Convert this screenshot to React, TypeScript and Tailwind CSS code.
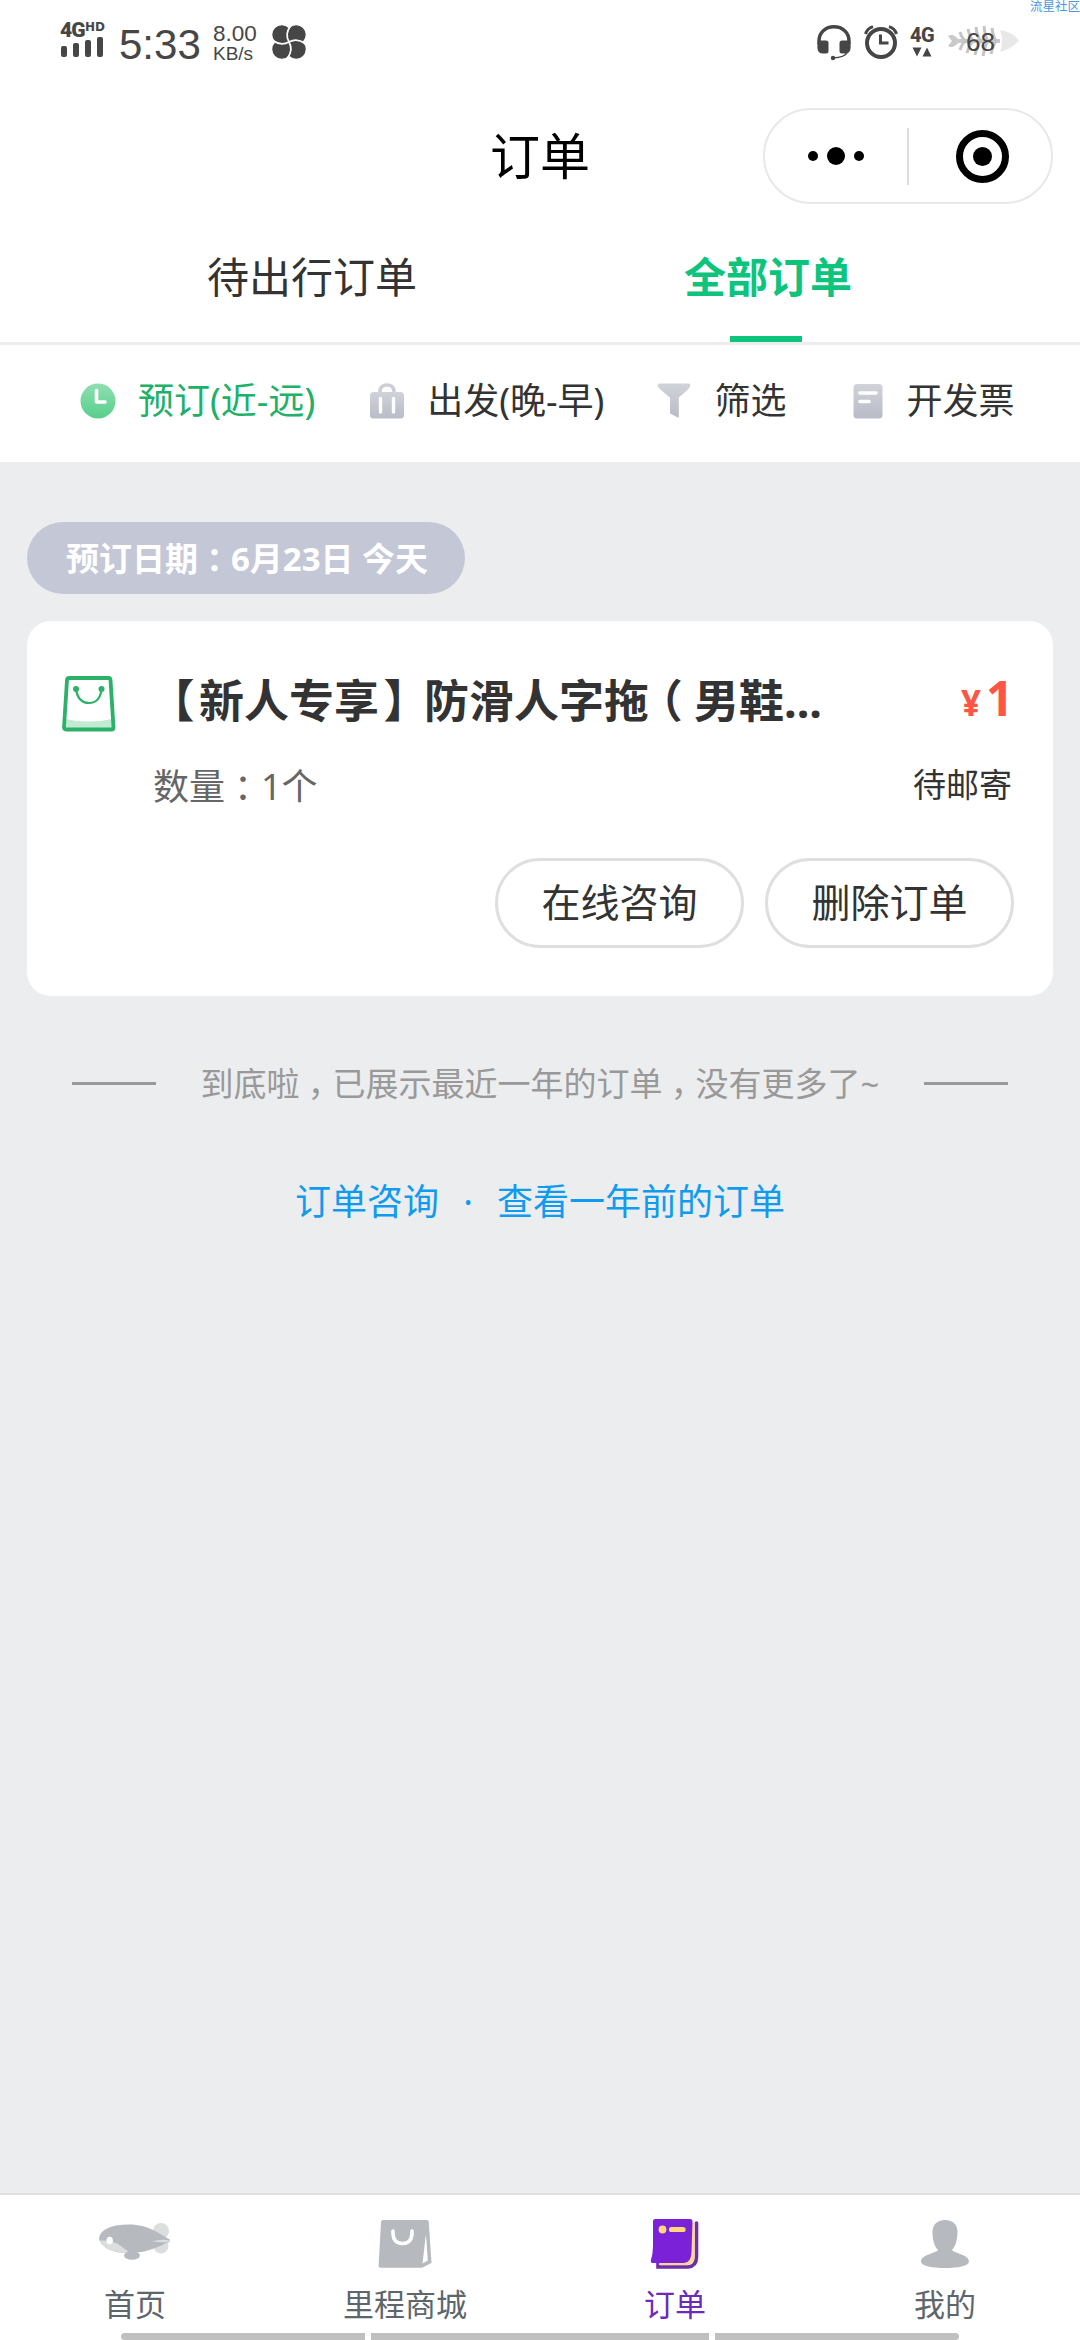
import React from 'react';

type IconProps = { className?: string };

// full-width punctuation trimmed to half width, then centred in its cell
function Punct({ children }: { children: string }) {
  return <span className="mx-[0.25em] [font-feature-settings:'halt']">{children}</span>;
}

/* ---------- status bar icons ---------- */

function Clover({ className }: IconProps) {
  return (
    <svg className={className} viewBox="0 0 34 34" fill="#464646">
      <circle cx="9.800" cy="9.800" r="9.500" />
      <circle cx="24.200" cy="9.800" r="9.500" />
      <circle cx="24.200" cy="24.200" r="9.500" />
      <circle cx="9.800" cy="24.200" r="9.500" />
      <path d="M10 10H24V24H10Z" />
      <g fill="none" stroke="#fff" strokeWidth="1.700">
        <path d="M17 17Q12.500 9 18.500 1" />
        <path d="M17 17Q25 12.500 33 18.500" />
        <path d="M17 17Q21.500 25 15.500 33" />
        <path d="M17 17Q9 21.500 1 15.500" />
      </g>
    </svg>
  );
}

function Headset({ className }: IconProps) {
  return (
    <svg className={className} viewBox="0 0 34 36" fill="#464646">
      <path d="M2 19V16C2 7.500 8.500 1.800 17 1.800S32 7.500 32 16V19" fill="none" stroke="#464646" strokeWidth="3.400" />
      <path d="M3 15.500H9Q11.500 15.500 11.500 18V26Q11.500 28.500 9 28.500H6Q0.400 28.500 0.400 22.500V18Z" />
      <path d="M31 15.500H25Q22.500 15.500 22.500 18V26Q22.500 28.500 25 28.500H28Q33.600 28.500 33.600 22.500V18Z" />
      <path d="M30.500 27Q28 32.500 16 33" fill="none" stroke="#464646" strokeWidth="1.500" />
      <circle cx="16" cy="33" r="2.200" />
    </svg>
  );
}

function Alarm({ className }: IconProps) {
  return (
    <svg className={className} viewBox="0 0 34 34" fill="none" stroke="#464646">
      <circle cx="17" cy="18" r="14" strokeWidth="4" />
      <path d="M16.500 9.500V18H24.500" strokeWidth="3" />
      <path d="M1.500 9A11 11 0 0 1 9 1.600M32.500 9A11 11 0 0 0 25 1.600" strokeWidth="3" />
    </svg>
  );
}

function FishBattery({ className }: IconProps) {
  return (
    <svg className={className} viewBox="0 0 72 32">
      <path d="M0 11Q5 8 10 14H52V18H10Q5 24 0 21L4 16Z" fill="#c9c9c9" />
      <path
        d="M12 7Q14 14 18 16Q14 18 12 25M20 4Q22 14 26 16Q22 18 19 28M28 2Q29 12 33 16Q29 20 27 30M36 1Q37 12 40 16Q37 20 35 31M44 3Q45 12 48 16Q45 20 43 29"
        fill="none"
        stroke="#c4c4c4"
        strokeWidth="3"
      />
      <path d="M52 5Q65 7 71 15.500Q65 23 52 27Q56 16 52 5Z" fill="#e8e8e8" />
    </svg>
  );
}

/* ---------- filter icons ---------- */

function Grads() {
  return (
    <svg className="absolute size-0">
      <defs>
        <linearGradient id="greyFill" x1="0" y1="0" x2="0" y2="1">
          <stop offset="0" stopColor="#d0d3d9" />
          <stop offset="1" stopColor="#b9bcc7" />
        </linearGradient>
        <linearGradient id="greenFill" x1="0" y1="0" x2="0" y2="1">
          <stop offset="0" stopColor="#8fdfb0" />
          <stop offset="1" stopColor="#57cf8c" />
        </linearGradient>
      </defs>
    </svg>
  );
}

function ClockIcon({ className }: IconProps) {
  return (
    <svg className={className} viewBox="0 0 36 36">
      <circle cx="18" cy="18" r="17.500" fill="url(#greenFill)" />
      <path d="M16.500 7.500V19H25" fill="none" stroke="#fff" strokeWidth="3.600" strokeLinecap="round" strokeLinejoin="round" />
    </svg>
  );
}

function LuggageIcon({ className }: IconProps) {
  return (
    <svg className={className} viewBox="0 0 36 36">
      <path d="M11 10V8Q11.500 2 18 2T25 8V10" fill="none" stroke="#cdd0d7" strokeWidth="3.600" />
      <rect x="1" y="9" width="34" height="26.500" rx="3.500" fill="url(#greyFill)" />
      <path d="M11.500 15.500V29M24.500 15.500V29" stroke="#fff" strokeWidth="3.400" strokeLinecap="round" />
    </svg>
  );
}

function FunnelIcon({ className }: IconProps) {
  return (
    <svg className={className} viewBox="0 0 34 36">
      <path d="M2.500 0.500H31.500Q34 0.500 33 3.500Q32 6 21.800 14.500V35L13 30.500V14.500Q2 6 1 3.500Q0 0.500 2.500 0.500Z" fill="url(#greyFill)" />
    </svg>
  );
}

function InvoiceIcon({ className }: IconProps) {
  return (
    <svg className={className} viewBox="0 0 30 36">
      <rect x="0.500" y="1" width="29" height="34.500" rx="3.500" fill="url(#greyFill)" />
      <path d="M7 10H23M7 18.500H16" stroke="#fff" strokeWidth="3.600" strokeLinecap="round" />
    </svg>
  );
}

/* ---------- card + bottom nav icons ---------- */

function ShopBag({ className }: IconProps) {
  return (
    <svg className={className} viewBox="0 0 54 56">
      <path d="M3 43Q27 48 50 43L51.500 52H2.500Z" fill="#c3ead3" />
      <path d="M7 2H46.500Q48.300 2 48.500 4L51.500 51.500Q51.500 53.500 49.500 53.500H4Q2 53.500 2 51.500L5 4Q5.200 2 7 2Z" fill="none" stroke="#2bb268" strokeWidth="3.800" />
      <path d="M14 13Q16 27 27 27T39.500 13" fill="none" stroke="#2bb268" strokeWidth="2.200" />
      <circle cx="14" cy="13" r="3" fill="#2bb268" />
      <circle cx="39.500" cy="13" r="3" fill="#2bb268" />
    </svg>
  );
}

function Blimp({ className }: IconProps) {
  return (
    <svg className={className} viewBox="0 0 72 38">
      <circle cx="62" cy="8" r="8" fill="#dcdddd" />
      <circle cx="62" cy="23" r="7.500" fill="#dcdddd" />
      <path d="M0 16Q1 2 30 1.500C50 1.500 60 11 71 16.500Q72 19.500 67 20C56 26 44 30 30 30Q5 30 0 16Z" fill="#b6babf" />
      <path d="M0.500 17.500Q14 17 22 23Q28 28 32 30Q6 30 0.500 17.500Z" fill="#dcdddd" />
      <path d="M53 18.500Q62 15.500 71.500 17.500Q70 20.500 53 18.500Z" fill="#dcdddd" />
      <ellipse cx="33" cy="32.500" rx="8" ry="4.300" fill="#b6babf" />
      <ellipse cx="10.700" cy="17.500" rx="3.200" ry="3.800" fill="#fff" />
    </svg>
  );
}

function MallBag({ className }: IconProps) {
  return (
    <svg className={className} viewBox="0 0 54 50">
      <path d="M5 1H49Q50.500 1 50.700 2.500L53.500 44L44 48.700H2.500Q0.500 48.700 0.600 46.500L3 3Q3.200 1 5 1Z" fill="#b6babf" />
      <path d="M48 15L44.500 44.500L49.800 41.500Z" fill="#fff" />
      <path d="M15 12V14.500Q15.500 24.500 24.500 24.500T34 14.500V12" fill="none" stroke="#fff" strokeWidth="3.600" strokeLinecap="round" />
    </svg>
  );
}

function OrderBook({ className }: IconProps) {
  return (
    <svg className={className} viewBox="0 0 50 52">
      <path d="M8 44V49H38Q46.500 48 46.500 39V5" fill="none" stroke="#6f2da8" strokeWidth="3.600" strokeLinecap="round" />
      <path d="M9 47H37Q44.500 46 44.500 38V5H40L10 40Z" fill="#ffd78a" />
      <path d="M5.500 1H40Q42.500 1 42.500 3.500L41.500 34Q41 45 34 45H2.500Q0.500 45 0.800 42.500Q3 36 3 28V3.500Q3 1 5.500 1Z" fill="#7b21d7" />
      <circle cx="12.500" cy="11.500" r="3.900" fill="#ffd87e" />
      <path d="M21.500 11.500H33" stroke="#ffd87e" strokeWidth="5.200" strokeLinecap="round" />
    </svg>
  );
}

function Person({ className }: IconProps) {
  return (
    <svg className={className} viewBox="0 0 50 50">
      <path d="M25 1C33 1 38 6 37.500 14C37 23 35 28 32 31C33 34 49 35.500 49 42.500C49 47 38 49 25 49S1 47 1 42.500C1 35.500 17 34 18 31C15 28 12.800 23 12.500 14C12.200 6 17 1 25 1Z" fill="#b6babf" />
    </svg>
  );
}

const filters = [
  { label: '预订(近-远)', Icon: ClockIcon, icon: 'w-9 mr-[22px]', box: 'ml-20 text-[#20b068]' },
  { label: '出发(晚-早)', Icon: LuggageIcon, icon: 'w-9 mr-[22px]', box: 'ml-[54px]' },
  { label: '筛选', Icon: FunnelIcon, icon: 'w-[34px] mr-[23px]', box: 'ml-[53px]' },
  { label: '开发票', Icon: InvoiceIcon, icon: 'w-[30px] mr-[23px]', box: 'ml-[67px]' },
];

const navItems = [
  { label: '首页', Icon: Blimp, icon: 'w-[72px] h-[38px] mb-[5px]', color: 'text-[#5d666c]' },
  { label: '里程商城', Icon: MallBag, icon: 'w-[54px] h-[50px]', color: 'text-[#5d666c]' },
  { label: '订单', Icon: OrderBook, icon: 'w-[50px] h-[52px]', color: 'text-[#6c2bb8]' },
  { label: '我的', Icon: Person, icon: 'w-[50px] h-[50px]', color: 'text-[#5d666c]' },
];

function StatusBar() {
  return (
    <div className="flex h-[86px] items-start text-[#464646]">
      <div className="ml-[60px] mt-[21px] w-[46px]">
        <div className="flex h-[16px] items-start whitespace-nowrap leading-none">
          <span className="w-[25px] font-['Roboto',sans-serif] text-[21px] font-black leading-[18px] tracking-[-0.8px]">4G</span>
          <span className="font-['DejaVu_Sans',sans-serif] text-[12px] font-bold leading-[13px]">HD</span>
        </div>
        <div className="ml-px flex h-[20px] items-end gap-[6px]">
          <i className="h-[11px] w-[6px] rounded-[2px] bg-[#464646]" />
          <i className="h-[14px] w-[6px] rounded-[2px] bg-[#464646]" />
          <i className="h-[17px] w-[6px] rounded-[2px] bg-[#464646]" />
          <i className="h-[20px] w-[6px] rounded-[2px] bg-[#464646]" />
        </div>
      </div>
      <span className="ml-[13px] mt-[24px] w-[82px] font-['Liberation_Sans',sans-serif] text-[42px] leading-[42px]">5:33</span>
      <div className="ml-[12px] mt-[23px] w-[48px] font-['Liberation_Sans',sans-serif]">
        <div className="text-[22.500px] leading-[21px]">8.00</div>
        <div className="text-[19px] leading-[20px]">KB/s</div>
      </div>
      <Clover className="ml-[11px] mt-[25px] h-[34px] w-[34px]" />
      <div className="flex-1" />
      <Headset className="mt-[25px] h-[36px] w-[34px]" />
      <Alarm className="ml-[13px] mt-[25px] h-[34px] w-[34px]" />
      <div className="ml-[12px] mt-[25px] w-[26px]">
        <div className="font-['Roboto',sans-serif] text-[20px] font-extrabold leading-[21px] tracking-[-0.5px]">4G</div>
        <svg className="ml-[2px] mt-px h-[10px] w-[20px]" viewBox="0 0 20 10" fill="#464646">
          <path d="M0.500 0.500H9.500L5 9.500ZM10.500 9.500H19.500L15 0.500Z" />
        </svg>
      </div>
      <div className="relative ml-[12px] mr-[60px] mt-[25px] h-[34px] w-[72px]">
        <FishBattery className="h-[32px] w-[72px]" />
        <span className="absolute left-[18px] top-[4px] font-['Liberation_Sans',sans-serif] text-[26px] leading-[26px]">68</span>
      </div>
    </div>
  );
}

export default function App() {
  return (
    <div className="relative flex h-[2340px] w-[1080px] flex-col overflow-hidden bg-[#ecedef] font-['Noto_Sans','Noto_Sans_CJK_SC',sans-serif] leading-none text-[#333]">
      <Grads />
      <span className="absolute right-0 top-0 whitespace-nowrap text-[12.500px] leading-[13px] text-[#4a97e0]">流星社区</span>

      <header className="bg-white">
        <StatusBar />

        {/* Mini-program title bar */}
        <div className="grid h-[140px] grid-cols-3 items-center">
          <div />
          <h1 className="text-center text-[50px] text-black">订单</h1>
          <div className="mr-[27px] flex h-[96px] w-[290px] items-center justify-self-end rounded-full border-2 border-[#e8e8e8]">
            <div className="flex w-[142px] items-center justify-center gap-[9px]">
              <i className="size-[10px] rounded-full bg-black" />
              <i className="size-[18px] rounded-full bg-black" />
              <i className="size-[10px] rounded-full bg-black" />
            </div>
            <i className="h-[57px] w-[2px] bg-[#dcdcdc]" />
            <div className="flex flex-1 justify-center">
              <div className="ml-[5px] flex size-[53px] items-center justify-center rounded-full border-[7px] border-black">
                <i className="size-[19px] rounded-full bg-black" />
              </div>
            </div>
          </div>
        </div>

        {/* Tabs */}
        <div className="flex h-[119px] border-b-[3px] border-[#ebecee] text-[42px]">
          <div className="ml-[84px] flex w-[456px] justify-center pt-[30px]">待出行订单</div>
          <div className="flex w-[456px] flex-col items-center justify-between pt-[30px] font-bold text-[#0cc47c]">
            <span>全部订单</span>
            <i className="mr-[4px] h-[6px] w-[72px] bg-[#0cc47c]" />
          </div>
        </div>

        {/* Filters */}
        <div className="flex h-[117px] items-center whitespace-nowrap pb-[5px] text-[36px]">
          {filters.map(({ label, Icon, icon, box }) => (
            <div key={label} className={`flex items-center ${box}`}>
              <Icon className={`h-9 shrink-0 ${icon}`} />
              <span>{label}</span>
            </div>
          ))}
        </div>
      </header>

      <main className="flex-1 px-[27px] pt-[60px]">
        <div className="flex h-[72px] w-[438px] items-center justify-center rounded-full bg-[#c4c8d6] pl-[2px] text-[33px] font-bold text-white">
          <span>
            预订日期<Punct>：</Punct>6月23日 今天
          </span>
        </div>

        <section className="mt-[27px] h-[375px] rounded-[24px] bg-white pl-[35px] pr-[39px] pt-[55px]">
          <div className="flex h-[56px] items-start">
            <ShopBag className="h-[56px] w-[54px]" />
            <h2 className="ml-[38px] mt-[2px] whitespace-nowrap text-[45px] font-bold">
              <span className="ml-[0.4em] mr-[0.1em] [font-feature-settings:'halt']">【</span>
              新人专享
              <span className="ml-[0.1em] mr-[0.4em] [font-feature-settings:'halt']">】</span>
              防滑人字拖<Punct>（</Punct>男鞋...
            </h2>
            <div className="-mt-[2px] ml-auto mr-[2px] flex items-baseline font-bold text-[#ff5545]">
              <span className="mr-[5px] text-[35px]">¥</span>
              <span className="w-[26px] text-[48px]">1</span>
            </div>
          </div>
          <div className="mt-[37px] flex justify-between">
            <span className="ml-[91px] text-[36px] text-[#666]">
              数量<Punct>：</Punct>1个
            </span>
            <span className="-mt-px mr-[2px] text-[33px]">待邮寄</span>
          </div>
          <div className="mt-[53px] flex justify-end gap-[21px] text-[39px]">
            <button className="h-[90px] w-[249px] rounded-full border-[3px] border-[#dfdfdf] pb-[4px]">在线咨询</button>
            <button className="h-[90px] w-[249px] rounded-full border-[3px] border-[#dfdfdf] pb-[4px]">删除订单</button>
          </div>
        </section>

        <div className="mt-[71px] flex items-center justify-between px-[45px] text-[33px] text-[#999]">
          <i className="h-[3px] w-[84px] bg-[#999]" />
          <span>
            到底啦<Punct>，</Punct>已展示最近一年的订单<Punct>，</Punct>没有更多了~
          </span>
          <i className="h-[3px] w-[84px] bg-[#999]" />
        </div>

        <div className="mt-[84px] flex justify-center text-[36px] text-[#109bee]">
          <span>订单咨询</span>
          <span className="w-[58px] text-center">·</span>
          <span>查看一年前的订单</span>
        </div>
      </main>

      <nav className="h-[147px] border-t-2 border-[#dfe0e1] bg-white">
        <div className="grid h-[138px] grid-cols-4">
          {navItems.map(({ label, Icon, icon, color }) => (
            <div key={label} className="flex flex-col items-center pt-[22px]">
              <div className="flex h-[54px] items-center">
                <Icon className={icon} />
              </div>
              <span className={`mt-[18px] text-[31px] leading-[31px] ${color}`}>{label}</span>
            </div>
          ))}
        </div>
        <div className="ml-[121px] flex h-[7px] gap-[6px]">
          <i className="w-[244px] rounded-l-full bg-[#c0c0c0]" />
          <i className="w-[338px] bg-[#c0c0c0]" />
          <i className="w-[244px] rounded-r-full bg-[#c0c0c0]" />
        </div>
      </nav>
    </div>
  );
}
